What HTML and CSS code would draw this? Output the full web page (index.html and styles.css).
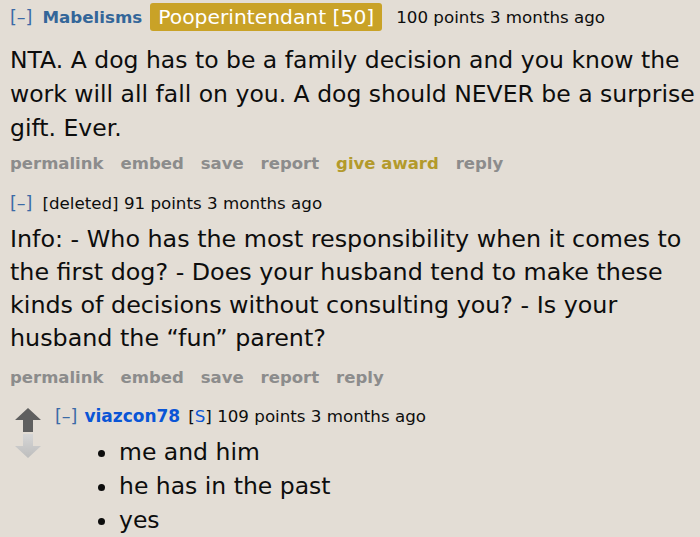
FILE: index.html
```html
<!DOCTYPE html>
<html>
<head>
<meta charset="utf-8">
<link rel="stylesheet" href="styles.css">
</head>
<body>
<div class="page">
  <div class="comment">
    <div class="tagline">
      <span class="expand">[–]</span>
      <span class="author">Mabelisms</span>
      <span class="flair">Pooperintendant [50]</span>
      <span class="meta">100 points 3 months ago</span>
    </div>
    <div class="body body1">NTA. A dog has to be a family decision and you know the work will all fall on you. A dog should NEVER be a surprise gift. Ever.</div>
    <ul class="buttons">
      <li>permalink</li>
      <li>embed</li>
      <li>save</li>
      <li>report</li>
      <li class="award">give award</li>
      <li>reply</li>
    </ul>
  </div>
  <div class="comment second">
    <div class="tagline">
      <span class="expand">[–]</span>
      <span class="meta">[deleted] 91 points 3 months ago</span>
    </div>
    <div class="body body2">Info: - Who has the most responsibility when it comes to the first dog? - Does your husband tend to make these kinds of decisions without consulting you? - Is your husband the “fun” parent?</div>
    <ul class="buttons buttons2">
      <li>permalink</li>
      <li>embed</li>
      <li>save</li>
      <li>report</li>
      <li>reply</li>
    </ul>
  </div>
  <div class="child">
    <div class="votes">
      <svg class="arrow" width="26" height="24" viewBox="0 0 26 24"><path d="M13 0 L26 12 L18 12 L18 24 L8 24 L8 12 L0 12 Z" fill="#5f5f5f"/></svg>
      <svg class="arrow" width="26" height="24" viewBox="0 0 26 24"><defs><linearGradient id="dg" x1="0" y1="0" x2="0" y2="1"><stop offset="0" stop-color="#d6d6d6"/><stop offset="1" stop-color="#bdbdbd"/></linearGradient></defs><path d="M8 0 L18 0 L18 12 L26 12 L13 24 L0 12 L8 12 Z" fill="url(#dg)"/></svg>
    </div>
    <div class="content">
      <div class="tagline">
        <span class="expand small">[–]</span>
        <span class="author op">viazcon78</span>
        <span class="meta"><span class="sub">[<span class="s">S</span>]</span> 109 points 3 months ago</span>
      </div>
      <ul class="list">
        <li>me and him</li>
        <li>he has in the past</li>
        <li>yes</li>
      </ul>
    </div>
  </div>
</div>
</body>
</html>
```

FILE: styles.css
```css
html, body {
  margin: 0;
  padding: 0;
  background: #e3ddd5;
}
body {
  font-family: "DejaVu Sans", Verdana, sans-serif;
  color: #0d0d0d;
  width: 700px;
  height: 537px;
  overflow: hidden;
}
.page {
  padding: 3px 0 0 10px;
}
.tagline {
  display: flex;
  align-items: center;
  height: 28px;
  font-size: 16.7px;
  white-space: nowrap;
}
.expand {
  color: #3b6aa6;
  font-size: 17.5px;
  margin-right: 10px;
}
.expand.small {
  margin-right: 7px;
}
.author {
  color: #336699;
  font-weight: bold;
  font-size: 16.7px;
  margin-right: 8px;
}
.author.op {
  color: #0a55d6;
  font-size: 17px;
  margin-right: 8px;
}
.flair {
  background: #c9a227;
  color: #fff;
  font-size: 20.3px;
  padding: 0 8px;
  height: 28px;
  line-height: 28px;
  border-radius: 3px;
  margin-right: 14px;
}
.sub .s {
  color: #0a55d6;
}
.body {
  font-size: 23.5px;
  line-height: 34px;
  margin: 12px 0 0;
  padding-right: 2px;
}
.body2 {
  font-size: 23.8px;
  line-height: 33px;
  margin-top: 5.5px;
}
.buttons {
  list-style: none;
  display: flex;
  gap: 17px;
  padding: 0;
  margin: 3px 0 0;
  height: 30px;
  align-items: center;
  font-size: 16.5px;
  font-weight: bold;
  color: #8c8c8c;
}
.buttons2 {
  margin-top: 7.5px;
}
.buttons .award {
  color: #b39a2c;
}
.second {
  margin-top: 11px;
}
.child {
  display: flex;
  margin-top: 10px;
  padding-left: 5px;
}
.votes {
  display: flex;
  flex-direction: column;
  gap: 2px;
  width: 26px;
  margin-top: 6px;
  margin-right: 14px;
}
.arrow {
  display: block;
}
.list {
  margin: 5px 0 0;
  padding: 0 0 0 64px;
  font-size: 23.5px;
  line-height: 34px;
}
```
